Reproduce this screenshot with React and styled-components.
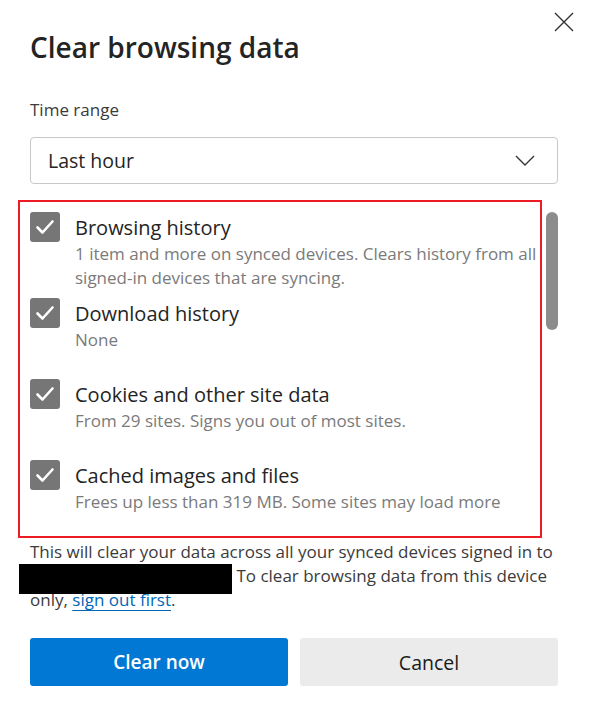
import React from "react";
import styled, { createGlobalStyle } from "styled-components";

const GlobalStyle = createGlobalStyle`
  html, body {
    margin: 0;
    padding: 0;
    background: #ffffff;
  }

  body {
    font-family: "Open Sans", "Noto Sans", sans-serif;
    color: #242424;
  }
`;

const Dialog = styled.div`
  position: relative;
  width: 590px;
  height: 716px;
  box-sizing: border-box;
  padding: 29px 32px 0 30px;
  background: #ffffff;
  overflow: hidden;
`;

const CloseButton = styled.button`
  position: absolute;
  top: 8px;
  right: 12px;
  width: 28px;
  height: 28px;
  padding: 0;
  border: none;
  background: transparent;
  display: flex;
  align-items: center;
  justify-content: center;
  cursor: pointer;
`;

const Title = styled.h1`
  margin: 0;
  font-size: 28px;
  line-height: 36px;
  font-weight: 600;
  color: #242424;
`;

const FieldLabel = styled.div`
  margin-top: 33px;
  font-size: 17px;
  line-height: 24px;
  color: #3b3b3b;
`;

const Select = styled.div`
  margin-top: 15px;
  height: 47px;
  box-sizing: border-box;
  border: 1px solid #c8c8c8;
  border-radius: 4px;
  padding: 0 22px 0 17px;
  display: flex;
  align-items: center;
  justify-content: space-between;
  font-size: 19.5px;
  color: #242424;
`;

const ScrollRegion = styled.div`
  position: relative;
  margin-top: 28px;
  height: 300px;
  display: flex;
`;

const ItemList = styled.div`
  flex: 1;
  overflow: hidden;
`;

const ScrollTrack = styled.div`
  width: 12px;
  margin-left: 8px;
`;

const ScrollThumb = styled.div`
  height: 118px;
  border-radius: 6px;
  background: #8c8c8c;
`;

// red annotation frame drawn over the list
const Highlight = styled.div`
  position: absolute;
  left: -12px;
  top: -12px;
  width: 524px;
  height: 338px;
  box-sizing: border-box;
  border: 2px solid #ed1c24;
  pointer-events: none;
`;

const Item = styled.div`
  display: flex;
  gap: 15px;
  min-height: 73px;
  margin-bottom: 8px;
`;

const Checkbox = styled.div`
  flex: none;
  width: 30px;
  height: 30px;
  box-sizing: border-box;
  border-radius: 3px;
  background: ${(p) => (p.checked ? "#767676" : "#ffffff")};
  border: ${(p) => (p.checked ? "none" : "1px solid #767676")};
  display: flex;
  align-items: center;
  justify-content: center;
`;

const ItemText = styled.div`
  flex: 1;
  padding-top: 2px;
`;

const ItemTitle = styled.div`
  font-size: 20px;
  line-height: 28px;
  color: #242424;
`;

const ItemDesc = styled.div`
  font-size: 17px;
  line-height: 24px;
  color: #7a7a7a;
`;

const Notice = styled.p`
  margin: 28px 0 0;
  font-size: 17px;
  line-height: 24px;
  color: #3b3b3b;
`;

const Redacted = styled.span`
  display: inline-block;
  width: 213px;
  height: 30px;
  margin: 0 0 -7px -11px;
  vertical-align: -5px;
  background: #000000;
`;

const Link = styled.a`
  color: #0067b8;
  text-decoration: underline;
  text-underline-offset: 4px;
`;

const Actions = styled.div`
  margin-top: 26px;
  display: grid;
  grid-template-columns: 1fr 1fr;
  gap: 12px;
`;

const Button = styled.button`
  height: 48px;
  border: none;
  border-radius: 3px;
  font-family: "Open Sans", "Noto Sans", sans-serif;
  font-size: ${(p) => (p.primary ? "19px" : "19.5px")};
  font-weight: ${(p) => (p.primary ? 600 : 400)};
  background: ${(p) => (p.primary ? "#0078d4" : "#ebebeb")};
  color: ${(p) => (p.primary ? "#ffffff" : "#1b1b1b")};
  cursor: pointer;
`;

const CheckIcon = () => (
  <svg width="30" height="30" viewBox="0 0 30 30">
    <path
      d="M7.5 15.5 L12.5 20.5 L22.5 9.5"
      fill="none"
      stroke="#ffffff"
      strokeWidth="2.6"
      strokeLinecap="round"
      strokeLinejoin="round"
    />
  </svg>
);

const CloseIcon = () => (
  <svg width="20" height="20" viewBox="0 0 20 20">
    <path
      d="M1 1 L19 19 M19 1 L1 19"
      stroke="#333333"
      strokeWidth="1.4"
      fill="none"
    />
  </svg>
);

const ChevronIcon = () => (
  <svg width="20" height="11" viewBox="0 0 20 11">
    <path
      d="M1 1 L10 10 L19 1"
      stroke="#333333"
      strokeWidth="1.4"
      fill="none"
    />
  </svg>
);

const items = [
  {
    title: "Browsing history",
    desc: "1 item and more on synced devices. Clears history from all signed-in devices that are syncing."
  },
  { title: "Download history", desc: "None" },
  {
    title: "Cookies and other site data",
    desc: "From 29 sites. Signs you out of most sites."
  },
  {
    title: "Cached images and files",
    desc: "Frees up less than 319 MB. Some sites may load more slowly on your next visit."
  },
  { title: "Passwords", desc: "None" },
  { title: "Autofill form data (includes forms and cards)", desc: "None" },
  { title: "Site permissions", desc: "None" },
  { title: "Hosted app data", desc: "2 apps: Microsoft Store, Outlook." }
];

export default function App() {
  return (
    <>
      <GlobalStyle />
      <Dialog>
        <CloseButton aria-label="Close">
          <CloseIcon />
        </CloseButton>
        <Title>Clear browsing data</Title>
        <FieldLabel>Time range</FieldLabel>
        <Select>
          <span>Last hour</span>
          <ChevronIcon />
        </Select>

        <ScrollRegion>
          <ItemList>
            {items.map((item, i) => (
              <Item key={item.title}>
                <Checkbox checked={i < 4}>{i < 4 ? <CheckIcon /> : null}</Checkbox>
                <ItemText>
                  <ItemTitle>{item.title}</ItemTitle>
                  <ItemDesc>{item.desc}</ItemDesc>
                </ItemText>
              </Item>
            ))}
          </ItemList>
          <ScrollTrack>
            <ScrollThumb />
          </ScrollTrack>
          <Highlight />
        </ScrollRegion>

        <Notice>
          This will clear your data across all your synced devices signed in to{" "}
          <Redacted /> To clear browsing data from this device only,{" "}
          <Link href="#">sign out first</Link>.
        </Notice>

        <Actions>
          <Button primary>Clear now</Button>
          <Button>Cancel</Button>
        </Actions>
      </Dialog>
    </>
  );
}
